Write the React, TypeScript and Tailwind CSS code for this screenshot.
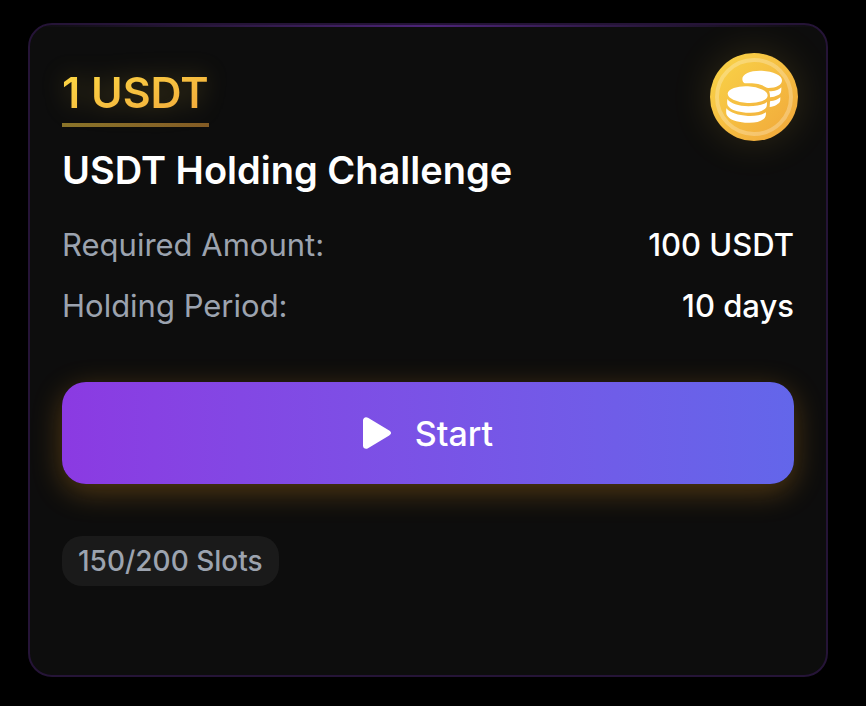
const details = [
  { label: "Required Amount:", value: "100 USDT" },
  { label: "Holding Period:", value: "10 days" },
];

function CoinStacks() {
  return (
    <svg viewBox="0 0 264 264" className="size-full" fill="#fff" aria-hidden="true">
      <circle cx="132" cy="132" r="111" fill="none" stroke="#fff" strokeOpacity="0.25" strokeWidth="12" />
      <path d="M97 78C97 63 120 53 150 53C187 54 216 66 216 82C216 96 200 105 175 105C168 105 164 99 154 96C142 92 127 91 104 91C99 88 97 83 97 78Z" />
      <path d="M214 103C214 118 214 122 203 127C195 131 189 133 180 133C180 125 179 119 177 115C195 115 206 111 214 103Z" />
      <path d="M211 133C211 146 211 149 200 155C193 159 187 161 179 162L180 145C194 144 203 140 211 133Z" />
      <ellipse cx="113" cy="125" rx="60" ry="25" transform="rotate(3 113 125)" />
      <path d="M52 138C62 152 85 159 115 160C143 160 161 155 171 147C171 160 170 164 163 169C151 178 133 181 108 179C82 177 63 171 55 160C51 155 51 149 52 138Z" />
      <path d="M49 166C61 180 84 187 114 189C141 190 158 185 168 178C168 188 167 194 160 199C148 208 130 211 105 209C79 207 61 201 53 190C48 184 48 178 49 166Z" />
    </svg>
  );
}

export default function App() {
  return (
    <main className="min-h-screen bg-black pt-[23px] pr-[38px] pb-7 pl-7 font-['Inter',sans-serif]">
      <article className="relative overflow-hidden rounded-3xl border-2 border-[#251437] bg-[#0d0d0d] px-8 pt-7 pb-[89px]">
        <div className="absolute inset-x-0 top-0 h-0.5 bg-linear-to-r from-transparent via-[#8b3ae2]/50 to-transparent" />
        <header className="flex items-start justify-between">
          <div>
            <div className="mt-3 inline-block">
              <p className="bg-linear-to-br from-[#fddc45] to-[#f0a53a] bg-clip-text text-[43px] leading-[54px] font-semibold text-transparent drop-shadow-[0_0_12px_rgba(253,210,69,0.25)]">
                1 USDT
              </p>
              <div className="mt-1 h-1 bg-linear-to-r from-[#8a742a] to-[#835b25]" />
            </div>
            <h2 className="mt-5 text-[38px] leading-[46px] font-semibold text-white">USDT Holding Challenge</h2>
          </div>
          <div className="-mr-1 size-[88px] shrink-0 rounded-full bg-linear-to-br from-[#f9d648] to-[#f0a53a] shadow-[0_0_40px_rgba(253,210,69,0.15)]">
            <CoinStacks />
          </div>
        </header>
        <dl className="mt-7 flex flex-col gap-[13px] text-[31px] leading-[48px]">
          {details.map((d) => (
            <div key={d.label} className="flex justify-between">
              <dt className="text-[#9ca3af]">{d.label}</dt>
              <dd className="font-medium text-white">{d.value}</dd>
            </div>
          ))}
        </dl>
        <button className="mt-[52px] flex h-[102px] w-full items-center justify-center gap-6 rounded-3xl bg-linear-to-r from-[#8b3ae2] to-[#6366ea] text-[34px] font-medium text-white shadow-[0_8px_30px_rgba(245,158,30,0.3)]">
          <svg viewBox="0 0 28 32" className="h-8 w-7" fill="currentColor" aria-hidden="true">
            <path d="M0 3.6C0 .8 2.6-.6 5 .8L26.200 13.600C28.600 15 28.600 17 26.200 18.400L5 31.200C2.600 32.600 0 31.200 0 28.400Z" />
          </svg>
          Start
        </button>
        <p className="mt-[52px] inline-block rounded-[20px] bg-[#1a1a1a] px-4 text-[28px] leading-[50px] font-medium text-[#9ca3af]">
          150/200 Slots
        </p>
      </article>
    </main>
  );
}
